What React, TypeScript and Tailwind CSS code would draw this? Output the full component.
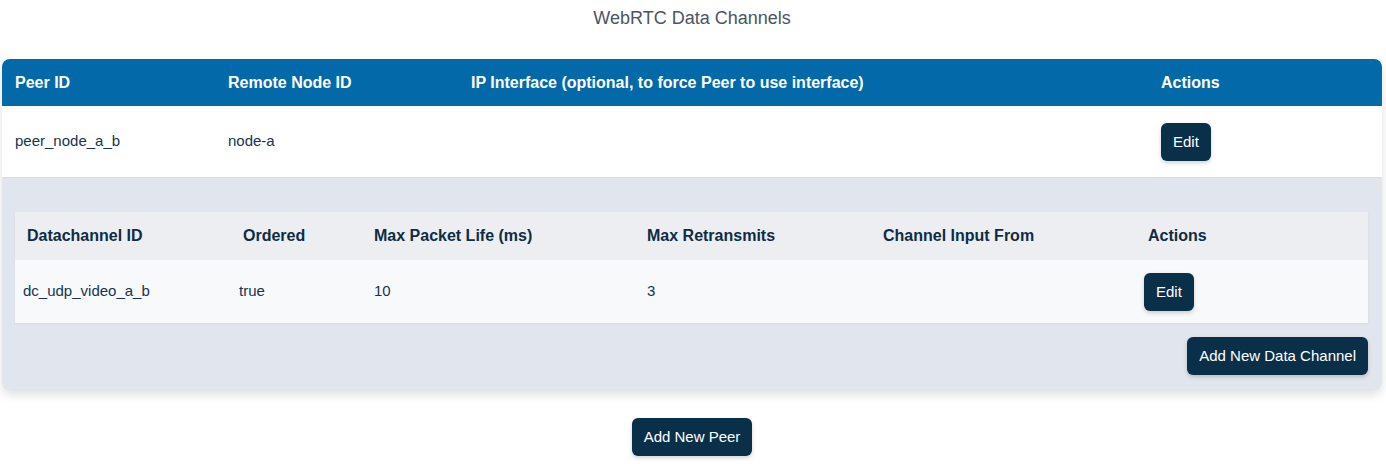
import React from "react";

const Btn = ({ children }: { children: React.ReactNode }) => (
  <button className="bg-[#0a3049] text-white text-[15px] leading-[22px] px-3 py-2 rounded-md shadow-[0_2px_4px_rgba(0,0,0,0.18)]">
    {children}
  </button>
);

export default function App() {
  return (
    <div className="font-['Liberation_Sans',Arial,sans-serif] bg-white pl-[2px] pr-[4px] min-h-[464px]">
      <div className="h-[59px] pt-[5px] text-center text-[18px] leading-[26px] text-[#4b5563]">
        WebRTC Data Channels
      </div>

      <div className="rounded-lg overflow-hidden shadow-[0_4px_10px_rgba(0,0,0,0.12)]">
        <div className="grid grid-cols-[213px_243px_690px_1fr] items-center h-[47px] bg-[#0369a8] text-white text-[16px] font-bold pl-[13px]">
          <div>Peer ID</div>
          <div>Remote Node ID</div>
          <div>IP Interface (optional, to force Peer to use interface)</div>
          <div>Actions</div>
        </div>
        <div className="grid grid-cols-[213px_243px_690px_1fr] items-center h-[72px] bg-white text-[15px] text-[#153450] pl-[13px] border-b border-[#d8dde6]">
          <div>peer_node_a_b</div>
          <div>node-a</div>
          <div></div>
          <div>
            <Btn>Edit</Btn>
          </div>
        </div>

        <div className="bg-[#e1e5ed] pt-[34px] pb-[16px] pl-[13px] pr-[14px]">
          <div className="shadow-[0_1px_2px_rgba(0,0,0,0.06)]">
            <div className="grid grid-cols-[228px_131px_273px_236px_264px_1fr] items-center h-[48px] bg-[#edeef1] text-[16px] font-bold text-[#0e2c44]">
              <div className="pl-[12px]">Datachannel ID</div>
              <div>Ordered</div>
              <div>Max Packet Life (ms)</div>
              <div>Max Retransmits</div>
              <div>Channel Input From</div>
              <div className="pl-[1px]">Actions</div>
            </div>
            <div className="grid grid-cols-[224px_135px_273px_236px_261px_1fr] items-center h-[63px] bg-[#f8f9fb] text-[15px] text-[#153450]">
              <div className="pl-[8px]">dc_udp_video_a_b</div>
              <div>true</div>
              <div>10</div>
              <div>3</div>
              <div></div>
              <div>
                <Btn>Edit</Btn>
              </div>
            </div>
          </div>
          <div className="flex justify-end mt-[14px]">
            <Btn>Add New Data Channel</Btn>
          </div>
        </div>
      </div>

      <div className="flex justify-center mt-[27px]">
        <Btn>Add New Peer</Btn>
      </div>
    </div>
  );
}
